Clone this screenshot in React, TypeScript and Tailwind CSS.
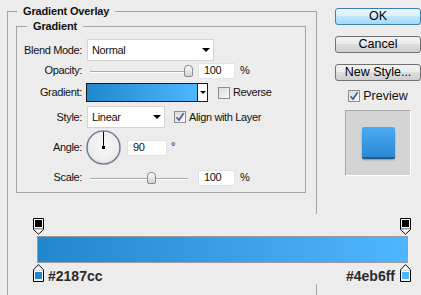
import React from "react";

function Label({ children }: { children: React.ReactNode }) {
  return <div className="w-[65px] shrink-0 text-right">{children}</div>;
}

function Arrow() {
  return (
    <svg width="8" height="4" viewBox="0 0 8 4" className="shrink-0">
      <path d="M0 0H8L4 4Z" fill="#000" />
    </svg>
  );
}

function Select({ wClass, value }: { wClass: string; value: string }) {
  return (
    <div className={`h-[22px] bg-white border border-[#d4d4d4] flex items-center justify-between pl-[4px] pr-[3px] ${wClass}`}>
      <span>{value}</span>
      <Arrow />
    </div>
  );
}

function Slider({ wClass, thumbClass }: { wClass: string; thumbClass: string }) {
  return (
    <div className={`relative h-[14px] shrink-0 ${wClass}`}>
      <div className="absolute left-0 right-0 top-[7px] h-[1px] bg-[#a9a9a9]" />
      <div className="absolute left-0 right-0 top-[8px] h-[1px] bg-white" />
      <div className={`absolute top-[1px] w-[9px] h-[12px] rounded-t-[4px] rounded-b-[2px] border border-[#8a8a8a] bg-linear-to-b from-[#fdfdfd] to-[#d2d2d2] ${thumbClass}`} />
    </div>
  );
}

function Input({ wClass, value }: { wClass: string; value: string }) {
  return (
    <div className={`h-[16px] bg-white border border-[#e2e2e2] pl-[5px] flex items-center shrink-0 ${wClass}`}>
      {value}
    </div>
  );
}

function Checkbox({ checked }: { checked?: boolean }) {
  return (
    <div className="w-[12px] h-[12px] shrink-0 border border-[#8e8f8f] bg-linear-to-br from-[#d9d9d9] to-[#fbfbfb] flex items-center justify-center">
      {checked && (
        <svg width="10" height="10" viewBox="0 0 10 10">
          <path d="M1.5 5.2L4 8L8.6 1.2" stroke="#4a5e98" strokeWidth="1.7" fill="none" />
        </svg>
      )}
    </div>
  );
}

function Dial() {
  return (
    <svg width="35" height="35" viewBox="0 0 35 35" className="shrink-0">
      <defs>
        <radialGradient id="dialg" cx="50%" cy="45%" r="55%">
          <stop offset="0%" stopColor="#f9f9f9" />
          <stop offset="80%" stopColor="#ededed" />
          <stop offset="100%" stopColor="#d8d8d8" />
        </radialGradient>
      </defs>
      <circle cx="17.5" cy="17.5" r="16.6" fill="url(#dialg)" stroke="#5a6893" strokeWidth="1.4" />
      <circle cx="17.5" cy="17.5" r="17.3" fill="none" stroke="#c9cddb" strokeWidth="0.5" />
      <line x1="17.5" y1="1.5" x2="17.5" y2="17.5" stroke="#000" strokeWidth="1" />
      <rect x="16" y="16" width="3" height="3" fill="#000" />
    </svg>
  );
}

function TopStop() {
  return (
    <svg width="11" height="17" viewBox="0 0 11 17" className="shrink-0">
      <path d="M0.5 0.5H10.5V11.5L5.5 16.2L0.5 11.5Z" fill="#fff" stroke="#000" />
      <rect x="2" y="2" width="7" height="7" fill="#000" />
      <rect x="1" y="10" width="9" height="1.5" fill="#9a9a9a" />
    </svg>
  );
}

function BottomStop({ fillClass }: { fillClass: string }) {
  return (
    <svg width="11" height="18" viewBox="0 0 11 18" className="shrink-0">
      <path d="M5.5 0.6L10.5 5.8V17.5H0.5V5.8Z" fill="#fff" stroke="#000" />
      <rect x="0.5" y="5.8" width="10" height="0.6" fill="#9a9a9a" />
      <rect x="2" y="8" width="7" height="7" className={fillClass} />
    </svg>
  );
}

function Button({ children, primary }: { children: React.ReactNode; primary?: boolean }) {
  return (
    <div
      className={
        primary
          ? "w-[86px] h-[17px] rounded-[3px] border border-[#3c7fb1] bg-[linear-gradient(#eaf6fd,#d9f0fc_50%,#bee6fd_50%,#a7d9f5)] flex items-center justify-center text-[12.5px] text-black"
          : "w-[86px] h-[17px] rounded-[3px] border border-[#707070] bg-[linear-gradient(#f2f2f2,#ebebeb_50%,#dddddd_50%,#cfcfcf)] flex items-center justify-center text-[12.5px] text-black"
      }
    >
      {children}
    </div>
  );
}

export default function App() {
  return (
    <div className="relative w-[421px] h-[295px] overflow-hidden bg-[#ececec] font-['Liberation_Sans',Arial,sans-serif] text-[11px] tracking-[-0.35px] text-[#111] leading-none">
      <div className="flex">
        <div className="pl-[7px] pt-[11px]">
          <div className="w-[310px] h-[320px] border border-[#a3a3a3]">
            <div className="-mt-[8px] ml-[9px] w-fit px-[6px] bg-[#ececec] font-bold tracking-[-0.15px] leading-[15px]">
              Gradient Overlay
            </div>
            <div className="mt-[7px] ml-[8px] w-[290px] border border-[#a3a3a3] pb-[6px]">
              <div className="-mt-[8px] ml-[10px] w-fit px-[6px] bg-[#ececec] font-bold tracking-[-0.15px] leading-[15px]">
                Gradient
              </div>
              <div className="flex flex-col pt-[5px]">
                <div className="flex items-center h-[22px]">
                  <Label>Blend Mode:</Label>
                  <div className="ml-[5px]">
                    <Select wClass="w-[127px]" value="Normal" />
                  </div>
                </div>
                <div className="flex items-center h-[17px] mt-[1px]">
                  <Label>Opacity:</Label>
                  <div className="ml-[8px]">
                    <Slider wClass="w-[100px]" thumbClass="left-[94px]" />
                  </div>
                  <div className="ml-[8px]">
                    <Input wClass="w-[37px]" value="100" />
                  </div>
                  <span className="ml-[5px]">%</span>
                </div>
                <div className="flex items-center h-[19px] mt-[4px]">
                  <Label>Gradient:</Label>
                  <div className="ml-[4px] w-[122px] h-[19px] border border-[#1a1a1a] flex">
                    <div className="flex-1 bg-linear-to-r from-[#2187cc] to-[#4eb6ff]" />
                    <div className="w-[10px] border-l border-[#1a1a1a] bg-white flex items-center justify-center">
                      <svg width="6" height="3" viewBox="0 0 6 3">
                        <path d="M0 0H6L3 3Z" fill="#000" />
                      </svg>
                    </div>
                  </div>
                  <div className="ml-[10px]">
                    <Checkbox />
                  </div>
                  <span className="ml-[3px]">Reverse</span>
                </div>
                <div className="flex items-center h-[22px] mt-[4px]">
                  <Label>Style:</Label>
                  <div className="ml-[5px]">
                    <Select wClass="w-[78px]" value="Linear" />
                  </div>
                  <div className="ml-[9px]">
                    <Checkbox checked />
                  </div>
                  <span className="ml-[3px]">Align with Layer</span>
                </div>
                <div className="flex items-center h-[35px] mt-[2px]">
                  <Label>Angle:</Label>
                  <div className="ml-[4px]">
                    <Dial />
                  </div>
                  <div className="ml-[6px]">
                    <Input wClass="w-[40px]" value="90" />
                  </div>
                  <span className="ml-[4px] self-start mt-[11px]">°</span>
                </div>
                <div className="flex items-center h-[17px] mt-[4px]">
                  <Label>Scale:</Label>
                  <div className="ml-[8px]">
                    <Slider wClass="w-[98px]" thumbClass="left-[57px]" />
                  </div>
                  <div className="ml-[10px]">
                    <Input wClass="w-[37px]" value="100" />
                  </div>
                  <span className="ml-[5px]">%</span>
                </div>
              </div>
            </div>
          </div>
        </div>
        <div className="ml-[18px] w-[86px] pt-[8px] flex flex-col items-center tracking-normal">
          <Button primary>OK</Button>
          <div className="mt-[11px]">
            <Button>Cancel</Button>
          </div>
          <div className="mt-[11px]">
            <Button>New Style...</Button>
          </div>
          <div className="mt-[9px] flex items-center h-[12px]">
            <Checkbox checked />
            <span className="ml-[3px] text-[12.5px]">Preview</span>
          </div>
          <div className="mt-[8px] w-[66px] h-[66px] bg-[#d4d4d4] border-t border-l border-[#a8a8a8] border-b-white border-r-white border-b border-r flex justify-center pt-[16px]">
            <div className="w-[33px] h-[30px] rounded-[2px] bg-linear-to-b from-[#4aabf2] to-[#2b88d3] shadow-[0_2px_0_#1e5a8c,0_3px_2px_rgba(0,0,0,0.35)]" />
          </div>
        </div>
      </div>
      <div className="absolute left-[9px] top-[214px] w-[412px] h-[70px] bg-[#ececec] pl-[24px] pt-[4px] tracking-normal">
        <div className="w-[378px] flex justify-between">
          <TopStop />
          <TopStop />
        </div>
        <div className="ml-[4px] mt-[1px] w-[371px] h-[27px] border border-[#9b9b9b] bg-linear-to-r from-[#2187cc] to-[#4eb6ff]" />
        <div className="mt-[1px] w-[378px] flex items-start">
          <BottomStop fillClass="fill-[#2187cc]" />
          <span className="ml-[4px] mt-[5px] text-[14px] font-bold text-[#2b2b2b]">#2187cc</span>
          <span className="ml-auto mr-[5px] mt-[5px] text-[14px] font-bold text-[#2b2b2b]">#4eb6ff</span>
          <BottomStop fillClass="fill-[#4eb6ff]" />
        </div>
      </div>
    </div>
  );
}
